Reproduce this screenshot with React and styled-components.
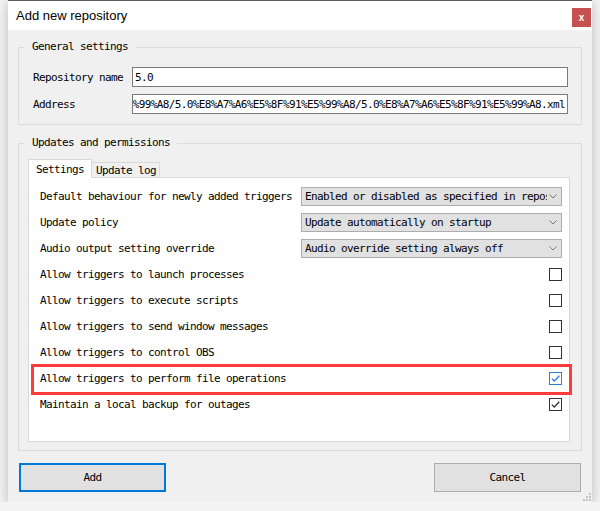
import styled, { createGlobalStyle } from "styled-components";

const GlobalStyle = createGlobalStyle`
  html, body {
    margin: 0;
    background: #f4f4f4;
  }
  body {
    font-family: "DejaVu Sans Mono", "Liberation Mono", monospace;
    font-size: 11px;
    letter-spacing: -0.62px;
    color: #000;
  }
  * { box-sizing: border-box; }
`;

const address = "%99%A8/5.0%E8%A7%A6%E5%8F%91%E5%99%A8/5.0%E8%A7%A6%E5%8F%91%E5%99%A8.xml";

const combos = [
  ["Default behaviour for newly added triggers", "Enabled or disabled as specified in repository"],
  ["Update policy", "Update automatically on startup"],
  ["Audio output setting override", "Audio override setting always off"],
];

const checks = [
  ["Allow triggers to launch processes", false],
  ["Allow triggers to execute scripts", false],
  ["Allow triggers to send window messages", false],
  ["Allow triggers to control OBS", false],
  ["Allow triggers to perform file operations", true, true],
  ["Maintain a local backup for outages", true],
];

const Chevron = () => (
  <svg width="8" height="5" viewBox="0 0 8 5">
    <path d="M0.5 0.5 L4 4 L7.5 0.5" fill="none" stroke="#7a7a7a" strokeWidth="1" />
  </svg>
);

const Check = ({ color }) => (
  <svg width="11" height="11" viewBox="0 0 11 11">
    <path d="M1.8 5.6 L4.3 8 L9.3 2.8" fill="none" stroke={color} strokeWidth="1.3" />
  </svg>
);

const Grip = () => (
  <svg width="9" height="9" viewBox="0 0 9 9">
    {[[7, 1], [4, 4], [7, 4], [1, 7], [4, 7], [7, 7]].map(([x, y]) => (
      <rect key={x + "-" + y} x={x} y={y} width="2" height="2" fill="#c4c4c4" />
    ))}
  </svg>
);

const App = () => {
  return (
    <>
      <GlobalStyle />
      <Window>
        <TitleBar>
          <Title>Add new repository</Title>
          <CloseButton>x</CloseButton>
        </TitleBar>
        <Body>
          <Group $pad="13px 13px 10px 14px">
            <Legend $shift="-8px">General settings</Legend>
            <FormGrid>
              <span>Repository name</span>
              <TextField>5.0</TextField>
              <span>Address</span>
              <TextField $end>
                <span>{address}</span>
              </TextField>
            </FormGrid>
          </Group>

          <Group $pad="9px 11px 8px 9px" $grow $gap="11px">
            <Legend $shift="-3px">Updates and permissions</Legend>
            <Tabs>
              <Tab $active>Settings</Tab>
              <Tab>Update log</Tab>
            </Tabs>
            <Pane>
              {combos.map(([label, value]) => (
                <Row key={label}>
                  <span>{label}</span>
                  <Combo>
                    <ComboText>{value}</ComboText>
                    <Chevron />
                  </Combo>
                </Row>
              ))}
              {checks.map(([label, checked, marked]) => (
                <Row key={label}>
                  <span>{label}</span>
                  <CheckBox $focus={marked}>
                    {checked && <Check color={marked ? "#2b7fd6" : "#333"} />}
                  </CheckBox>
                  {marked && <Highlight />}
                </Row>
              ))}
            </Pane>
          </Group>

          <Buttons>
            <Button $default>Add</Button>
            <Button>Cancel</Button>
          </Buttons>
        </Body>
        <GripCorner>
          <Grip />
        </GripCorner>
      </Window>
    </>
  );
};

export default App;

const Window = styled.div`
  position: relative;
  margin-left: 8px;
  width: 584px;
  height: 502px;
  background: #f0f0f0;
  border-top: 1px solid #5c5c5c;
  box-shadow: 0 3px 12px rgba(0, 0, 0, 0.25);
  display: flex;
  flex-direction: column;
`;

const TitleBar = styled.div`
  height: 29px;
  flex: none;
  background: #fff;
  display: flex;
  align-items: flex-start;
  justify-content: space-between;
  padding-left: 8px;
`;

const Title = styled.div`
  font-family: "Liberation Sans", Arial, sans-serif;
  font-size: 13px;
  letter-spacing: 0;
  line-height: 29px;
  color: #000;
`;

const CloseButton = styled.div`
  margin-top: 7px;
  margin-right: 1px;
  width: 19px;
  height: 19px;
  background: #c75050;
  color: #fff;
  font-family: "Liberation Sans", Arial, sans-serif;
  font-weight: bold;
  font-size: 10px;
  letter-spacing: 0;
  display: flex;
  align-items: center;
  justify-content: center;
`;

const Body = styled.div`
  flex: 1;
  display: flex;
  flex-direction: column;
  padding: 10px 10px 10px;
`;

const Group = styled.fieldset`
  margin: ${(p) => (p.$gap ? `${p.$gap} 0 0` : "0")};
  padding: ${(p) => p.$pad};
  border: 1px solid #dcdcdc;
  min-width: 0;
  flex: ${(p) => (p.$grow ? 1 : "none")};
  display: flex;
  flex-direction: column;
`;

const Legend = styled.legend`
  margin-left: ${(p) => p.$shift};
  padding: 0 7px;
  line-height: 14px;
`;

const FormGrid = styled.div`
  display: grid;
  grid-template-columns: 99px 1fr;
  grid-auto-rows: 20px;
  row-gap: 7px;
  align-items: center;
`;

const TextField = styled.div`
  height: 20px;
  border: 1px solid #7a7a7a;
  background: #fff;
  padding: 0 2px;
  display: flex;
  align-items: center;
  justify-content: ${(p) => (p.$end ? "flex-end" : "flex-start")};
  overflow: hidden;
  white-space: pre;
`;

const Tabs = styled.div`
  display: flex;
  align-items: flex-end;
  height: 18px;
  position: relative;
  z-index: 1;
`;

const Tab = styled.div`
  height: ${(p) => (p.$active ? "19px" : "15px")};
  margin-bottom: ${(p) => (p.$active ? "-1px" : "0")};
  padding: ${(p) => (p.$active ? "0 7px" : "0 3px 0 4px")};
  background: ${(p) => (p.$active ? "#fff" : "#f0f0f0")};
  border: 1px solid #d9d9d9;
  border-bottom: none;
  border-left: ${(p) => (p.$active ? "1px solid #d9d9d9" : "none")};
  display: flex;
  align-items: center;
`;

const Pane = styled.div`
  flex: 1;
  background: #fff;
  border: 1px solid #d9d9d9;
  padding: 9px 7px 0 11px;
  display: flex;
  flex-direction: column;
  gap: 7px;
`;

const Row = styled.div`
  position: relative;
  height: 19px;
  display: flex;
  align-items: center;
  justify-content: space-between;
`;

const Combo = styled.div`
  width: 261px;
  height: 19px;
  background: #e1e1e1;
  border: 1px solid #adadad;
  display: flex;
  align-items: center;
  padding: 0 4px 0 3px;
  gap: 2px;
`;

const ComboText = styled.div`
  flex: 1;
  overflow: hidden;
  white-space: nowrap;
`;

const CheckBox = styled.div`
  width: 13px;
  height: 13px;
  border: 1px solid ${(p) => (p.$focus ? "#2b7fd6" : "#333")};
  background: #fff;
  display: flex;
  align-items: center;
  justify-content: center;
`;

const Highlight = styled.div`
  position: absolute;
  left: -9px;
  right: -10px;
  top: -5px;
  bottom: -7px;
  border: 3px solid #ff3b3b;
  pointer-events: none;
`;

const Buttons = styled.div`
  margin-top: 12px;
  padding: 0 1px;
  display: flex;
  justify-content: space-between;
`;

const Button = styled.div`
  width: 147px;
  height: 29px;
  background: #e1e1e1;
  border: ${(p) => (p.$default ? "2px solid #0078d7" : "1px solid #adadad")};
  display: flex;
  align-items: center;
  justify-content: center;
`;

const GripCorner = styled.div`
  position: absolute;
  right: 1px;
  bottom: 1px;
  display: flex;
`;
